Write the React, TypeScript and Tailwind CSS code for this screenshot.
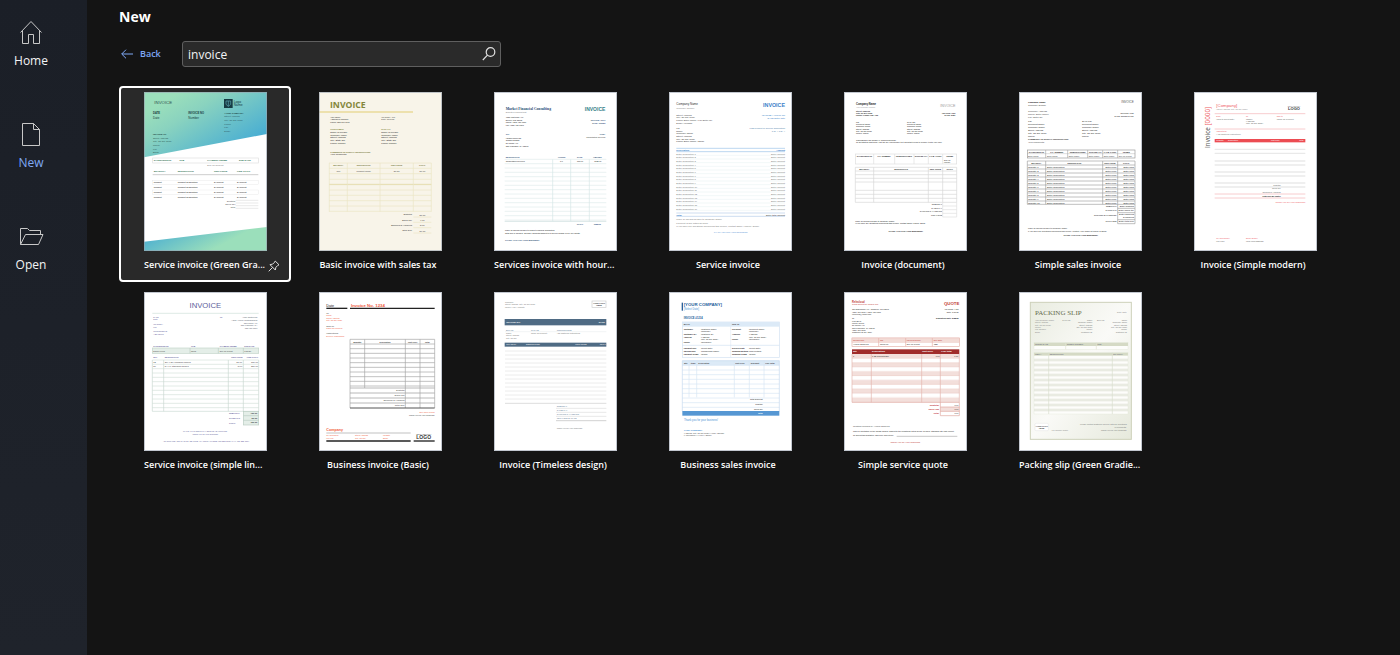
import { ReactNode } from 'react'

type Anchor = 'start' | 'middle' | 'end'

type TextRowsProps = {
	x: number;
	y: number;
	rows: string[];
	size?: number;
	gap?: number;
	fill?: string;
	bold?: boolean;
	anchor?: Anchor;
	font?: string;
}

// A block of small print, one <text> per row
const TextRows = ({ x, y, rows, size = 8, gap = 9, fill = '#444', bold = false, anchor = 'start', font = 'Liberation Sans, sans-serif' }: TextRowsProps) => (
	<g fontSize={size} fill={fill} fontWeight={bold ? 700 : 400} textAnchor={anchor} fontFamily={font}>
		{rows.map((row, index) => (
			<text key={index} x={x} y={y + index * gap}>{row}</text>
		))}
	</g>
)

type CellsProps = { y: number; cells: [number, string][]; size?: number; fill?: string; bold?: boolean; anchor?: Anchor }

const Cells = ({ y, cells, size = 7, fill = '#444', bold = false, anchor = 'start' }: CellsProps) => (
	<g fontSize={size} fill={fill} fontWeight={bold ? 700 : 400} textAnchor={anchor} fontFamily="Liberation Sans, sans-serif">
		{cells.map(([x, label]) => (
			<text key={x} x={x} y={y}>{label}</text>
		))}
	</g>
)

type RulesProps = { x1: number; x2: number; y: number; gap?: number; count?: number; color: string; width?: number }

const Rules = ({ x1, x2, y, gap = 0, count = 1, color, width = 2 }: RulesProps) => (
	<g stroke={color} strokeWidth={width}>
		{Array.from({ length: count }, (_, i) => (
			<line key={i} x1={x1} x2={x2} y1={y + i * gap} y2={y + i * gap} />
		))}
	</g>
)

const Columns = ({ xs, y1, y2, color, width = 2 }: { xs: number[]; y1: number; y2: number; color: string; width?: number }) => (
	<g stroke={color} strokeWidth={width}>
		{xs.map((x) => (
			<line key={x} x1={x} x2={x} y1={y1} y2={y2} />
		))}
	</g>
)

const Sheet = ({ origin, paper = '#ffffff', children }: { origin: string; paper?: string; children: ReactNode }) => (
	<svg viewBox={`${origin} 369 477`} className="w-[123px] h-[159px] outline -outline-offset-1 outline-gray-400/60" style={{ background: paper }} aria-hidden="true">
		{children}
	</svg>
)

const address = ['Street Address', 'City, ST ZIP Code', 'Phone', 'Fax', 'Email']

const GreenGradient = () => (
	<Sheet origin="87 31">
		<defs>
			<linearGradient id="greenTop" x1="0.2" y1="0.1" x2="0.9" y2="0.7">
				<stop offset="0" stopColor="#9bdfbb" />
				<stop offset="0.3" stopColor="#8ad3bf" />
				<stop offset="1" stopColor="#4bafd2" />
			</linearGradient>
			<linearGradient id="greenBottom" x1="0" y1="0" x2="0.8" y2="0.3">
				<stop offset="0.2" stopColor="#4fb1d0" />
				<stop offset="1" stopColor="#9bdfbb" />
			</linearGradient>
		</defs>
		<path d="M87 31H456V157L87 227Z" fill="url(#greenTop)" />
		<path d="M87 480L456 436V508H87Z" fill="url(#greenBottom)" />
		<TextRows x={118} y={68} rows={['INVOICE']} size={13} fill="#2f5050" />
		<rect x="327" y="52" width="26" height="27" fill="#173b43" />
		<path d="M333 58h14v10l-7 6-7-6Z M340 58v16" fill="none" stroke="#5aa5b0" strokeWidth="2" />
		<TextRows x={356} y={63} rows={['Logo', 'Name']} gap={11} size={10} fill="#173b43" />
		<TextRows x={114} y={98} rows={['DATE']} size={8} bold fill="#163a3a" />
		<TextRows x={114} y={113} rows={['Date']} size={9} fill="#163a3a" />
		<TextRows x={220} y={98} rows={['INVOICE NO']} size={8} bold fill="#163a3a" />
		<TextRows x={220} y={113} rows={['Number']} size={9} fill="#163a3a" />
		<TextRows x={328} y={96} rows={['YOUR COMPANY']} size={7} bold fill="#163a3a" />
		<TextRows x={328} y={107} rows={address} size={7} gap={11} fill="#2f5b66" />
		<TextRows x={114} y={159} rows={['INVOICE TO']} size={7} bold fill="#163a3a" />
		<TextRows x={114} y={171} rows={address} size={7} gap={11} fill="#2f5b56" />
		<rect x="113" y="229" width="317" height="15" fill="none" stroke="#dedede" strokeWidth="2" />
		<Cells y={239} bold size={7} fill="#1d6b4a" cells={[[116, 'SALESPERSON'], [193, 'JOB'], [277, 'PAYMENT TERMS'], [372, 'DUE DATE']]} />
		<TextRows x={277} y={252} rows={['Due on Receipt']} size={7} fill="#777" />
		<Cells y={272} bold size={7} fill="#1d6b4a" cells={[[116, 'QUANTITY'], [188, 'DESCRIPTION'], [297, 'UNIT PRICE'], [366, 'LINE TOTAL']]} />
		<Rules x1={113} x2={430} y={279} color="#b5b5b5" />
		{[305, 320, 335, 350].map((y) => (
			<Cells key={y} y={y} fill="#111" cells={[[116, 'Product'], [188, 'Product description'], [297, '$Amount'], [366, '$Amount']]} />
		))}
		<rect x="113" y="296" width="317" height="13" fill="none" stroke="#dedede" />
		<rect x="113" y="325" width="317" height="14" fill="none" stroke="#dedede" />
		<TextRows x={361} y={362} rows={['Subtotal', 'Sales Tax', 'Total']} size={7} anchor="end" fill="#555" />
		<Rules x1={362} x2={430} y={356} gap={8} count={4} color="#dedede" />
	</Sheet>
)

const BasicSalesTax = () => (
	<Sheet origin="27 19" paper="#f8f4e9">
		<TextRows x={60} y={67} rows={['INVOICE']} size={26} bold fill="#84863a" font="Open Sans, sans-serif" />
		<Rules x1={27} x2={309} y={79} color="#e2cd72" width={3} />
		<TextRows x={61} y={96} rows={['Your Name', 'Address of company', 'Phone: 555-010-0199']} size={6} gap={8} fill="#222" />
		<TextRows x={214} y={96} rows={['INVOICE # 100', 'Date: 05/01/20']} size={6} gap={8} fill="#444" />
		<TextRows x={61} y={133} rows={['CUSTOMER']} size={7} bold fill="#84863a" />
		<TextRows x={61} y={142} rows={['Name of Person', 'Company name', 'Street Address', 'City, State ZIP', 'Phone number']} size={7} gap={8} fill="#222" />
		<TextRows x={214} y={133} rows={['SHIP TO']} size={7} bold fill="#84863a" />
		<TextRows x={214} y={142} rows={['Name of Person', 'Company name', 'Street Address', 'City, State ZIP', 'Phone number']} size={7} gap={8} fill="#222" />
		<TextRows x={61} y={201} rows={['COMMENTS OR SPECIAL INSTRUCTIONS']} size={6} bold fill="#6d6f2c" />
		<TextRows x={61} y={208} rows={['Your comments']} size={7} fill="#222" />
		<Rules x1={57} x2={364} y={232} gap={16} count={3} color="#ebe5c4" />
		<Rules x1={57} x2={364} y={281} gap={16} count={7} color="#ebe5c4" />
		<Rules x1={57} x2={364} y={296} color="#dfd79f" />
		<Columns xs={[58, 112, 210, 310, 364]} y1={232} y2={378} color="#ebe5c4" />
		<Cells y={241} bold size={6} anchor="middle" fill="#6d6f2c" cells={[[85, 'QUANTITY'], [161, 'DESCRIPTION'], [260, 'UNIT PRICE'], [337, 'TOTAL']]} />
		<Cells y={258} anchor="middle" cells={[[85, '100'], [161, 'Product name'], [260, '$0.50'], [337, '50.00']]} />
		<TextRows x={306} y={389} rows={['Subtotal', 'Sales Tax', 'Shipping & Handling', 'Total Due']} size={7} gap={16} anchor="end" fill="#333" />
		<TextRows x={337} y={390} rows={['50.00', '4.00', '5.00', '59.00']} size={7} gap={16} anchor="middle" fill="#333" />
		<Rules x1={310} x2={364} y={394} gap={16} count={4} color="#ebe5c4" />
	</Sheet>
)

const HoursAndRate = () => (
	<Sheet origin="27 19">
		<TextRows x={62} y={73} rows={['Market Financial Consulting']} size={11} bold fill="#274b74" font="Liberation Serif, serif" />
		<TextRows x={62} y={82} rows={['Experts in earning trust']} size={6} fill="#777" />
		<TextRows x={361} y={76} rows={['INVOICE']} size={15} bold anchor="end" fill="#36838a" />
		<TextRows x={62} y={97} rows={['4321 First Main Ave', 'Denver, CO 12345', 'Phone: (123) 456-7890', 'Fax: (123) 456-7891']} size={6} gap={8} fill="#111" />
		<TextRows x={361} y={106} rows={['INVOICE: #00-1', 'DATE: 1/30/20']} size={6} gap={10} bold anchor="end" fill="#274b74" />
		<TextRows x={62} y={148} rows={['TO:']} size={7} bold fill="#274b74" />
		<TextRows x={62} y={159} rows={['Hanson Cheevas', 'Graphic Design', '89 Pacific Ave', 'San Francisco, CA 12345']} size={6} gap={8} fill="#111" />
		<TextRows x={361} y={148} rows={['FOR:']} size={7} bold anchor="end" fill="#274b74" />
		<TextRows x={361} y={158} rows={['Consultation services']} size={6} anchor="end" fill="#333" />
		<Cells y={217} bold size={6} fill="#274b74" cells={[[62, 'DESCRIPTION'], [219, 'HOURS'], [276, 'RATE'], [324, 'AMOUNT']]} />
		<Rules x1={59} x2={364} y={221} gap={13} count={15} color="#dfecec" />
		<Rules x1={59} x2={364} y={407} color="#c4d9d9" />
		<Columns xs={[203, 257, 313]} y1={221} y2={407} color="#d5e6e6" />
		<Cells y={229} size={6} fill="#222" cells={[[62, 'Consultation services'], [225, '3.0'], [276, '375.00'], [328, '1125.00']]} />
		<Cells y={417} bold size={6} fill="#274b74" cells={[[275, 'TOTAL'], [326, '1125.00']]} />
		<TextRows x={60} y={436} rows={['Make all checks payable to Market Financial Consulting.', 'Total due in 15 days. Overdue accounts subject to a service charge of 1% per month.']} size={6} gap={8} fill="#111" />
		<TextRows x={60} y={467} rows={['THANK YOU FOR YOUR BUSINESS!']} size={6} bold fill="#274b74" />
	</Sheet>
)

const ServiceInvoice = () => (
	<Sheet origin="27 19">
		<TextRows x={49} y={58} rows={['Company Name']} size={9} fill="#333" />
		<TextRows x={49} y={69} rows={['Company Slogan']} size={7} fill="#888" />
		<TextRows x={375} y={65} rows={['INVOICE']} size={16} bold anchor="end" fill="#3b7fc9" />
		<TextRows x={49} y={90} rows={['Street Address', 'City, ST ZIP Code', 'Phone Enter phone | Fax Enter fax', 'Email | Website']} size={7} gap={8} fill="#444" />
		<TextRows x={375} y={90} rows={['INVOICE # Invoice No', 'DATE Enter date']} size={7} gap={9} anchor="end" fill="#3b7fc9" />
		<TextRows x={49} y={130} rows={['TO', 'Name', 'Company Name', 'Street Address', 'City, ST ZIP Code', 'Phone Enter phone | Email']} size={7} gap={8} fill="#333" />
		<TextRows x={375} y={130} rows={['FOR Project or service description', 'P.O. # P.O. #']} size={7} gap={8} anchor="end" fill="#4c7ba9" />
		<Rules x1={49} x2={375} y={188} gap={10} count={2} color="#9cc3e8" />
		<Cells y={197} bold fill="#3b7fc9" cells={[[49, 'Description'], [349, 'Amount']]} />
		<TextRows x={49} y={207} rows={Array.from({ length: 16 }, (_, i) => `Enter description ${i + 1}`)} size={7} gap={11} fill="#777" />
		<TextRows x={375} y={207} rows={Array(16).fill('Enter amount')} size={7} gap={11} anchor="end" fill="#777" />
		<Rules x1={49} x2={375} y={209} gap={11} count={16} color="#d7e8ea" width={1} />
		<Rules x1={49} x2={375} y={382} gap={10} count={2} color="#b5cbe8" />
		<Cells y={390} bold fill="#3b7fc9" cells={[[49, 'Total']]} />
		<TextRows x={375} y={390} rows={['Enter total amount']} size={7} anchor="end" fill="#333" />
		<TextRows x={49} y={404} rows={['Make all checks payable to Company Name', 'Payment is due within 30 days.', 'If you have any questions concerning this invoice, contact Name | Phone | Email']} size={7} gap={10} fill="#777" />
		<TextRows x={212} y={443} rows={['THANK YOU FOR YOUR BUSINESS!']} size={6} anchor="middle" fill="#5a97d6" />
	</Sheet>
)

const InvoiceDocument = () => (
	<Sheet origin="27 19">
		<TextRows x={63} y={59} rows={['Company Name']} size={8} bold fill="#222" />
		<TextRows x={63} y={66} rows={['Your company slogan']} size={6} fill="#999" />
		<TextRows x={361} y={64} rows={['INVOICE']} size={11} anchor="end" fill="#999" />
		<TextRows x={63} y={80} rows={['Street Address', 'City, ST ZIP Code', 'Phone: Phone Fax: Fax']} size={6} gap={6} bold fill="#222" />
		<TextRows x={361} y={84} rows={['INVOICE #100', 'DATE: Date']} size={6} gap={6} bold anchor="end" fill="#222" />
		<TextRows x={63} y={111} rows={['TO:', 'Recipient Name', 'Company Name', 'Street Address', 'City, ST ZIP Code', 'Phone: Phone']} size={6} gap={7} fill="#111" />
		<TextRows x={216} y={111} rows={['SHIP TO:', 'Recipient Name', 'Company Name', 'Street Address', 'City, ST ZIP Code', 'Phone: Phone']} size={6} gap={7} fill="#111" />
		<TextRows x={63} y={165} rows={['COMMENTS OR SPECIAL INSTRUCTIONS:', 'To get started right away, just tap any placeholder text and start typing to replace it with your own.']} size={6} gap={7} fill="#222" />
		<rect x="61" y="205" width="304" height="30" fill="none" stroke="#dedede" strokeWidth="2" />
		<Columns xs={[116, 179, 237, 280, 323]} y1={205} y2={235} color="#dedede" />
		<Cells y={214} bold size={6} anchor="middle" fill="#222" cells={[[88, 'SALESPERSON'], [147, 'P.O. NUMBER'], [207, 'REQUISITIONER'], [258, 'SHIPPED VIA'], [301, 'F.O.B. POINT'], [344, 'TERMS']]} />
		<TextRows x={327} y={225} rows={['Due on', 'receipt']} size={6} gap={7} fill="#222" />
		<Rules x1={61} x2={365} y={245} gap={11} count={5} color="#d6d6d6" />
		<Rules x1={61} x2={365} y={314} gap={12} count={4} color="#d6d6d6" />
		<Columns xs={[61, 116, 280, 323, 365]} y1={245} y2={350} color="#d6d6d6" />
		<Cells y={253} bold size={6} anchor="middle" fill="#222" cells={[[88, 'QUANTITY'], [198, 'DESCRIPTION'], [301, 'UNIT PRICE'], [344, 'TOTAL']]} />
		<TextRows x={321} y={358} rows={['SUBTOTAL', 'SALES TAX', 'SHIPPING & HANDLING', 'TOTAL DUE']} size={6} gap={11} anchor="end" fill="#222" />
		<Rules x1={323} x2={365} y={361} gap={11} count={4} color="#dedede" />
		<Columns xs={[323, 365]} y1={350} y2={394} color="#dedede" />
		<TextRows x={61} y={408} rows={['Make all checks payable to Company Name', 'If you have any questions concerning this invoice, contact Name, Phone, Email']} size={6} gap={7} fill="#111" />
		<TextRows x={212} y={440} rows={['THANK YOU FOR YOUR BUSINESS!']} size={6} bold anchor="middle" fill="#111" />
	</Sheet>
)

const SimpleSales = () => (
	<Sheet origin="27 19">
		<TextRows x={54} y={51} rows={['Company Name']} size={7} bold fill="#222" />
		<TextRows x={54} y={60} rows={['Company Slogan']} size={7} />
		<TextRows x={371} y={52} rows={['INVOICE']} size={9} anchor="end" fill="#555" />
		<TextRows x={54} y={78} rows={['Company Address', 'Phone: Enter phone', 'Fax: Enter fax']} size={7} />
		<TextRows x={371} y={85} rows={['INVOICE #100', 'DATE: ENTER DATE']} size={6} anchor="end" bold />
		<TextRows x={54} y={108} rows={['TO:', 'Recipient Name', 'Company Name', 'Street Address', 'City, ST ZIP Code', 'Phone']} size={7} fill="#222" />
		<TextRows x={216} y={108} rows={['SHIP TO:', 'Recipient Name', 'Company Name', 'Street Address', 'City, ST ZIP Code', 'Phone']} size={7} fill="#222" />
		<TextRows x={54} y={164} rows={['COMMENTS OR SPECIAL INSTRUCTIONS:']} size={6} bold fill="#222" />
		<TextRows x={54} y={173} rows={['Your comments']} size={7} />
		<rect x="52" y="193" width="323" height="24" fill="none" stroke="#999" strokeWidth="2" />
		<Rules x1={52} x2={375} y={204} color="#999" width={1} />
		<Columns xs={[107, 173, 233, 278, 323]} y1={193} y2={217} color="#aaa" />
		<Cells y={201} bold size={6} anchor="middle" fill="#222" cells={[[79, 'SALESPERSON'], [140, 'P.O. NUMBER'], [203, 'REQUISITIONER'], [256, 'SHIPPED VIA'], [300, 'F.O.B. POINT'], [349, 'TERMS']]} />
		<Cells y={213} size={6} cells={[[54, 'Enter Name'], [111, 'Enter Name'], [176, 'Enter Name'], [236, 'Enter Name'], [281, 'Enter Name'], [326, 'Due on receipt']]} />
		<Rules x1={52} x2={375} y={226} gap={12} count={11} color="#a0a0a0" />
		<Rules x1={52} x2={375} y={356} color="#a0a0a0" />
		<Columns xs={[52, 107, 278, 323, 375]} y1={226} y2={356} color="#a0a0a0" />
		<Cells y={235} bold size={6} anchor="middle" fill="#222" cells={[[79, 'QUANTITY'], [193, 'DESCRIPTION'], [300, 'UNIT PRICE'], [349, 'TOTAL']]} />
		<TextRows x={54} y={246} rows={Array.from({ length: 10 }, (_, i) => `Quantity ${i + 1}`)} size={7} gap={12} fill="#222" />
		<TextRows x={111} y={246} rows={Array(10).fill('Enter description')} size={7} gap={12} fill="#222" />
		<TextRows x={320} y={246} rows={Array(10).fill('Enter price')} size={7} gap={12} anchor="end" fill="#222" />
		<TextRows x={372} y={246} rows={Array(10).fill('Enter total')} size={7} gap={12} anchor="end" fill="#222" />
		<Cells y={364} size={6} bold anchor="end" cells={[[320, 'SUBTOTAL']]} />
		<Cells y={377} size={6} bold anchor="end" cells={[[320, 'SALES TAX']]} />
		<Cells y={390} size={6} bold anchor="end" cells={[[320, 'SHIPPING & HANDLING']]} />
		<Cells y={410} size={6} bold anchor="end" cells={[[320, 'TOTAL DUE']]} />
		<TextRows x={372} y={364} rows={['Enter subtotal', 'Enter sales tax', 'Enter shipping']} size={7} gap={12} anchor="end" fill="#222" />
		<TextRows x={372} y={398} rows={['& handling', 'Enter total due']} size={7} gap={12} anchor="end" fill="#222" />
		<Rules x1={323} x2={375} y={368} gap={13} count={2} color="#a0a0a0" />
		<Rules x1={323} x2={375} y={402} gap={12} count={2} color="#a0a0a0" />
		<Columns xs={[323, 375]} y1={356} y2={414} color="#a0a0a0" />
		<TextRows x={54} y={429} rows={['Make all checks payable to Company Name', 'If you have any questions concerning this invoice, contact: Your Name at Phone or Email']} size={6} gap={9} fill="#222" />
		<TextRows x={212} y={450} rows={['THANK YOU FOR YOUR BUSINESS!']} size={6} bold anchor="middle" fill="#111" />
	</Sheet>
)

const SimpleModern = () => (
	<Sheet origin="27 19">
		<text transform="translate(74 187) rotate(-90)" fontSize="19" fill="#555" fontFamily="Open Sans, sans-serif">Invoice <tspan fill="#ee5a5f">[0000]</tspan></text>
		<TextRows x={94} y={63} rows={['[Company]']} size={13} fill="#ee5a5f" />
		<TextRows x={94} y={73} rows={['[Street Address, City, ST ZIP Code]']} size={6} fill="#888" />
		<TextRows x={327} y={64} rows={['REPLACE WITH']} size={5} anchor="middle" fill="#777" />
		<TextRows x={327} y={74} rows={['LOGO']} size={12} bold anchor="middle" fill="#333" />
		<Rules x1={89} x2={361} y={84} color="#f4b4b6" />
		<Cells y={95} size={6} fill="#ee5a5f" cells={[[94, 'Date'], [183, 'To'], [275, 'Ship to']]} />
		<Cells y={103} size={6} fill="#666" cells={[[94, '[Click to select date]'], [275, '[Same as recipient]']]} />
		<TextRows x={183} y={103} rows={['[Name]', '[Address]', '[City, ST ZIP Code]']} size={6} gap={6} fill="#555" />
		<Rules x1={89} x2={361} y={130} color="#f4b4b6" />
		<TextRows x={94} y={138} rows={['Instructions']} size={6} fill="#ee5a5f" />
		<TextRows x={94} y={147} rows={['[Add additional instructions]']} size={6} fill="#777" />
		<rect x="89" y="160" width="272" height="10" fill="#ec4c52" />
		<Cells y={167} size={6} fill="#fff" cells={[[94, 'Quantity'], [129, 'Description'], [258, 'Unit Price'], [343, 'Total']]} />
		<Rules x1={89} x2={361} y={191} gap={12} count={2} color="#d8d8d8" />
		<Rules x1={89} x2={361} y={226} gap={12} count={2} color="#cfcfcf" />
		<Rules x1={89} x2={361} y={259} gap={12} count={2} color="#cfcfcf" />
		<Rules x1={89} x2={361} y={292} gap={12} count={2} color="#cfcfcf" />
		<TextRows x={287} y={300} rows={['Subtotal', 'Sales Tax', 'Shipping & Handling']} size={6} gap={11} anchor="end" fill="#666" />
		<TextRows x={287} y={333} rows={['Total Due By [Date]']} size={6} anchor="end" bold fill="#222" />
		<Rules x1={89} x2={361} y={325} gap={12} count={2} color="#f4b4b6" />
		<TextRows x={361} y={353} rows={['Thank you for your business!']} size={7} anchor="end" fill="#ee5a5f" />
		<Cells y={460} size={6} fill="#ee5a5f" cells={[[94, 'Tel [Telephone]'], [183, 'Email [Email]']]} />
		<Cells y={468} size={6} fill="#555" cells={[[94, 'Fax [Fax]'], [183, 'Web [Web address]']]} />
	</Sheet>
)

const SimpleLines = () => (
	<Sheet origin="27 19">
		<TextRows x={211} y={68} rows={['INVOICE']} size={23} anchor="middle" fill="#60609a" />
		<Rules x1={52} x2={371} y={83} color="#cfe0da" />
		<TextRows x={55} y={97} rows={['DATE', 'Date']} size={6} gap={7} fill="#60609a" />
		<TextRows x={55} y={119} rows={['INVOICE #', '100']} size={6} gap={7} fill="#60609a" />
		<TextRows x={55} y={140} rows={['CUSTOMER ID', 'ABC 12345']} size={6} gap={7} fill="#60609a" />
		<TextRows x={254} y={98} rows={['TO']} size={6} fill="#60609a" />
		<TextRows x={367} y={98} rows={['Anjali Chaturvedi', 'Adina Avenue Photographers', '123 Pacific Ave', 'San Francisco, CA', '123-456-7890']} size={6} gap={8} anchor="end" fill="#555b68" />
		<Cells y={183} bold size={6} fill="#60609a" cells={[[55, 'SALESPERSON'], [168, 'JOB'], [254, 'PAYMENT TERMS'], [328, 'DUE DATE']]} />
		<rect x="52" y="187" width="319" height="16" fill="#e4eee8" stroke="#c2d4ca" strokeWidth="2" />
		<Columns xs={[165, 250, 325]} y1={187} y2={203} color="#b9cdc2" />
		<Cells y={198} size={6} cells={[[55, 'Daniel Perea'], [168, 'Sales'], [254, 'Due on receipt'], [328, '1/30/20']]} />
		<Cells y={218} bold size={6} fill="#60609a" cells={[[55, 'QTY'], [89, 'DESCRIPTION'], [289, 'UNIT PRICE'], [335, 'LINE TOTAL']]} />
		<Rules x1={52} x2={371} y={223} gap={13} count={12} color="#d3e1da" />
		<Rules x1={52} x2={371} y={377} color="#cadbd3" />
		<Columns xs={[52, 86, 280, 325, 371]} y1={223} y2={377} color="#c9d8d0" />
		<Cells y={232} cells={[[55, '12'], [89, '20" x 30" hanging frames'], [304, '15.00'], [348, '180.00']]} />
		<Cells y={244} cells={[[55, '50'], [89, '5" x 7" standing frames'], [308, '5.00'], [348, '250.00']]} />
		<rect x="325" y="377" width="46" height="41" fill="#e4eee8" stroke="#b9cdc2" strokeWidth="2" />
		<Rules x1={325} x2={371} y={390} gap={14} count={2} color="#b9cdc2" />
		<TextRows x={282} y={384} rows={['SUBTOTAL', 'SALES TAX', 'TOTAL']} size={6} gap={15} bold fill="#60609a" />
		<TextRows x={367} y={385} rows={['430.00', '20.00', '450.00']} size={7} gap={14} bold anchor="end" fill="#444" />
		<TextRows x={211} y={440} rows={['MAKE ALL CHECKS PAYABLE TO ADATUM LTD.', 'Thank you for your business!']} size={6} gap={7} anchor="middle" fill="#60609a" />
		<TextRows x={213} y={469} rows={['ADATUM LTD. 123 MAIN ST. SEATTLE, WA 78910 | PHONE: 111-222-3333 | FAX: 111-222-3334']} size={6} anchor="middle" fill="#60609a" />
	</Sheet>
)

const BusinessBasic = () => (
	<Sheet origin="552 19">
		<TextRows x={574} y={63} rows={['Date']} size={11} fill="#222" />
		<TextRows x={648} y={63} rows={['Invoice No. 1234']} size={13} bold fill="#f05a3c" />
		<Rules x1={574} x2={637} y={68} color="#222" width={4} />
		<Rules x1={645} x2={899} y={68} color="#222" width={4} />
		<TextRows x={574} y={85} rows={['To']} size={7} />
		<TextRows x={574} y={92} rows={['Name', 'Street Address', 'City, ST ZIP Code']} size={6} gap={7} fill="#f05a3c" />
		<TextRows x={574} y={123} rows={['Ship To']} size={7} />
		<TextRows x={574} y={130} rows={['Same as recipient']} size={6} fill="#f05a3c" />
		<TextRows x={574} y={146} rows={['Instructions']} size={7} />
		<TextRows x={574} y={153} rows={['Delivery instructions']} size={6} fill="#f05a3c" />
		<Rules x1={645} x2={899} y={161} gap={14} count={11} color="#a3a3a3" />
		<Rules x1={645} x2={899} y={307} gap={15} count={4} color="#949494" />
		<Columns xs={[645, 811, 855, 899]} y1={161} y2={367} color="#a3a3a3" />
		<Columns xs={[689]} y1={161} y2={307} color="#a3a3a3" />
		<Rules x1={645} x2={899} y={367} color="#555" width={3} />
		<Cells y={171} anchor="middle" size={6} bold fill="#333" cells={[[667, 'Quantity'], [750, 'Description'], [833, 'Unit Price'], [877, 'Total']]} />
		<TextRows x={809} y={316} rows={['Subtotal', 'Sales Tax', 'Shipping & Handling', 'Total Due']} size={7} gap={15} anchor="end" />
		<TextRows x={899} y={381} rows={['Due upon receipt']} size={6} anchor="end" fill="#f05a3c" />
		<TextRows x={899} y={392} rows={['Thank you for your business!']} size={6} anchor="end" />
		<TextRows x={574} y={437} rows={['Company']} size={11} bold fill="#f05a3c" />
		<Rules x1={574} x2={827} y={442} color="#444" width={1} />
		<TextRows x={574} y={452} rows={['Tel Telephone', 'Fax Fax']} size={6} gap={7} fill="#f05a3c" />
		<TextRows x={660} y={452} rows={['Street Address', 'City, ST ZIP']} size={6} gap={7} fill="#f05a3c" />
		<TextRows x={744} y={452} rows={['Website', 'Email']} size={6} gap={7} fill="#f05a3c" />
		<TextRows x={866} y={447} rows={['REPLACE WITH']} size={6} anchor="middle" />
		<TextRows x={866} y={461} rows={['LOGO']} size={15} bold anchor="middle" fill="#333" />
		<Rules x1={574} x2={827} y={466} color="#222" width={4} />
		<Rules x1={836} x2={899} y={466} color="#222" width={4} />
	</Sheet>
)

const Timeless = () => (
	<Sheet origin="27 19">
		<TextRows x={60} y={51} rows={['Company', 'Street Address, City, ST ZIP Code', 'Phone | Fax | Website']} size={6} gap={8} fill="#777" />
		<rect x="321" y="46" width="42" height="20" fill="#fff" stroke="#ccc" strokeWidth="2" />
		<TextRows x={342} y={54} rows={['YOUR LOGO', 'HERE']} size={6} gap={7} bold anchor="middle" fill="#222" />
		<rect x="59" y="100" width="305" height="19" fill="#4f6b84" />
		<Cells y={112} size={7} bold fill="#fff" cells={[[64, 'INVOICE NO.'], [341, 'DATE']]} />
		<Cells y={135} size={6} fill="#5a7894" cells={[[63, 'BILL TO'], [138, 'SHIP TO'], [215, 'INSTRUCTIONS']]} />
		<Rules x1={60} x2={364} y={138} color="#d8dde2" width={1} />
		<TextRows x={63} y={145} rows={['Name', 'Street Address', 'City, ST ZIP']} size={6} gap={7} fill="#777" />
		<Cells y={145} size={6} fill="#777" cells={[[138, 'Same as recipient'], [215, 'Add additional instructions']]} />
		<rect x="59" y="171" width="305" height="12" fill="#4f6b84" />
		<Cells y={179} size={6} fill="#fff" cells={[[64, 'QUANTITY'], [123, 'DESCRIPTION'], [271, 'UNIT PRICE'], [344, 'TOTAL']]} />
		<Rules x1={60} x2={364} y={196} gap={12} count={13} color="#e2e2e2" />
		<Rules x1={60} x2={364} y={353} color="#cccccc" />
		<TextRows x={215} y={363} rows={['SUBTOTAL', 'SALES TAX', 'SHIPPING & HANDLING', 'TOTAL DUE BY DATE']} size={6} gap={12} fill="#5a7894" />
		<Rules x1={213} x2={364} y={368} gap={12} count={3} color="#dddddd" />
		<Rules x1={213} x2={364} y={405} color="#bbbbbb" />
		<TextRows x={215} y={429} rows={['Thank you for your business!']} size={6} fill="#777" />
	</Sheet>
)

const BusinessSales = () => (
	<Sheet origin="552 19">
		<rect x="590" y="51" width="4" height="24" fill="#26609b" />
		<TextRows x={596} y={62} rows={['[YOUR COMPANY]']} size={13} bold fill="#26609b" />
		<TextRows x={596} y={73} rows={['[Select Date]']} size={8} fill="#4b93d4" />
		<TextRows x={596} y={100} rows={['INVOICE #1234']} size={8} bold fill="#26609b" />
		<rect x="592" y="109" width="291" height="106" fill="none" stroke="#d2e2f2" strokeWidth="2" />
		<rect x="592" y="109" width="291" height="14" fill="#dceaf7" />
		<Cells y={118} size={6} bold cells={[[596, 'Bill To'], [741, 'Ship To']]} />
		<Columns xs={[737]} y1={109} y2={215} color="#e2ecf6" />
		<Rules x1={592} x2={883} y={179} color="#d2e2f2" />
		<TextRows x={596} y={132} rows={['Customer', '', 'Customer ID#', 'Address', '', 'Phone']} size={6} gap={8} bold fill="#222" />
		<TextRows x={648} y={132} rows={['[Customer Name]', '[Company]', '[Customer ID]', '[Address]', '[City, ST ZIP Code]', '[Telephone]']} size={6} gap={8} fill="#222" />
		<TextRows x={741} y={132} rows={['Recipient', '', 'Address', '', 'Phone']} size={6} gap={8} bold fill="#222" />
		<TextRows x={792} y={132} rows={['[Recipient Name]', '[Company]', '[Address]', '[City, ST ZIP Code]', '[Telephone]']} size={6} gap={8} fill="#222" />
		<TextRows x={596} y={190} rows={['Payment Due', 'Salesperson', 'Payment Terms']} size={6} gap={9} bold fill="#222" />
		<TextRows x={648} y={190} rows={['[Select Date]', '[Salesperson Name]', '[Terms]']} size={6} gap={9} fill="#222" />
		<TextRows x={741} y={190} rows={['Delivery Date', 'Shipping Method', 'Shipping Terms']} size={6} gap={9} bold fill="#222" />
		<TextRows x={792} y={190} rows={['[Select Date]', '[Ship Method]', '[Terms]']} size={6} gap={9} fill="#222" />
		<rect x="592" y="225" width="291" height="14" fill="#dceaf7" />
		<Cells y={234} size={6} bold cells={[[597, 'Qty.'], [617, 'Item#'], [640, 'Description'], [751, 'Unit Price'], [797, 'Discount'], [841, 'Line Total']]} />
		<Rules x1={592} x2={883} y={225} color="#c5daef" />
		<Rules x1={592} x2={883} y={239} gap={14} count={10} color="#d6e5f4" />
		<Columns xs={[592, 883]} y1={225} y2={377} color="#c5daef" />
		<Columns xs={[612, 635, 748, 793, 837]} y1={225} y2={335} color="#d6e5f4" />
		<TextRows x={833} y={344} rows={['Total Discount', 'Subtotal', 'Sales Tax']} size={6} gap={14} anchor="end" fill="#222" />
		<rect x="592" y="376" width="291" height="14" fill="#5697d3" />
		<TextRows x={833} y={385} rows={['Total']} size={6} bold anchor="end" fill="#fff" />
		<TextRows x={597} y={407} rows={['Thank you for your business!']} size={8} fill="#4b93d4" />
		<TextRows x={597} y={436} rows={['[Your Company]']} size={7} bold fill="#4b93d4" />
		<TextRows x={597} y={444} rows={['[Address, City, ST ZIP Code] | [Web Address]', 't. [Telephone] | f. [Fax] | [Email]']} size={6} gap={8} />
	</Sheet>
)

const ServiceQuote = () => (
	<Sheet origin="27 19">
		<TextRows x={51} y={51} rows={['Relecloud']} size={8} bold fill="#bf3b37" />
		<TextRows x={51} y={58} rows={['Cloud storing the modern way']} size={6} fill="#bf3b37" />
		<TextRows x={373} y={57} rows={['QUOTE']} size={13} bold anchor="end" fill="#bf3b37" />
		<TextRows x={51} y={74} rows={['123 Elderwood Ave., Nashville, TN 12345', '(123) 456-7890 | (123) 456-7891', 'relecloud@email.com']} size={6} gap={7} fill="#222" />
		<TextRows x={371} y={74} rows={['INVOICE #: 111', 'Date: 1/30/20']} size={6} gap={7} anchor="end" fill="#222" />
		<TextRows x={51} y={101} rows={['To', 'Finn Boyd', 'Liberty Group', '89 Pacific Ave', 'San Francisco, CA 12345', '(123) 456-7890', 'Customer ID No. 1234']} size={6} gap={7} fill="#222" />
		<TextRows x={371} y={101} rows={['Expiration Date: 2/28/20']} size={6} bold anchor="end" fill="#222" />
		<rect x="51" y="157" width="322" height="25" fill="#fff" stroke="#e5b1a9" strokeWidth="2" />
		<rect x="51" y="157" width="322" height="13" fill="#f3dcd7" stroke="#e5b1a9" />
		<Columns xs={[131, 212, 292]} y1={157} y2={182} color="#e5b1a9" />
		<Cells y={167} size={6} fill="#bf3b37" cells={[[54, 'Salesperson'], [135, 'Job'], [215, 'Payment Terms'], [296, 'Due Date']]} />
		<Cells y={179} size={6} fill="#222" cells={[[54, 'Yvonne Embezza'], [135, 'Sales rep'], [215, 'Due on receipt'], [296, 'TBD']]} />
		<rect x="51" y="191" width="322" height="14" fill="#a02c2b" />
		<Cells y={200} bold size={7} fill="#fff" cells={[[54, 'Qty'], [111, 'Description'], [262, 'Unit price'], [319, 'Line total']]} />
		{[205, 231, 258, 284, 310, 337].map((y) => (
			<rect key={y} x="51" y={y} width="322" height="13" fill="#f3dfdb" />
		))}
		<Rules x1={51} x2={373} y={218} gap={13} count={10} color="#e8c3bc" width={1} />
		<Rules x1={51} x2={373} y={350} color="#e0a79f" />
		<Columns xs={[51, 109, 260, 316, 373]} y1={205} y2={350} color="#e4b5ad" />
		<Cells y={213} size={6} fill="#222" cells={[[54, '1'], [111, '1 TB cloud storage'], [302, '0.00'], [358, '0.00']]} />
		<rect x="316" y="364" width="57" height="13" fill="#f3dfdb" />
		<Rules x1={316} x2={373} y={364} gap={13} count={3} color="#e0a79f" />
		<Columns xs={[316, 373]} y1={350} y2={390} color="#e0a79f" />
		<TextRows x={312} y={360} rows={['Subtotal', 'Sales Tax', 'Total']} size={7} gap={13} bold anchor="end" fill="#bf3b37" />
		<TextRows x={370} y={360} rows={['0.00', '0.00', '0.00']} size={6} gap={13} anchor="end" fill="#222" />
		<TextRows x={54} y={424} rows={['Quotation prepared by: Yvonne Embezza']} size={6} />
		<TextRows x={54} y={438} rows={['This is a quotation on the goods named, subject to the conditions noted below: 30 days, standard rate cost receipt.', 'To accept this quotation, sign here and return:']} size={6} gap={13} fill="#222" />
		<Rules x1={185} x2={367} y={452} color="#555" width={1} />
		<TextRows x={211} y={472} rows={['Thank you for your business!']} size={7} anchor="middle" fill="#bf3b37" />
	</Sheet>
)

const PackingSlip = () => (
	<Sheet origin="552 19">
		<defs>
			<linearGradient id="slip" x1="0" y1="0" x2="1" y2="1">
				<stop offset="0" stopColor="#e9ece0" />
				<stop offset="0.3" stopColor="#f4f5ef" />
				<stop offset="0.5" stopColor="#fafaf7" />
				<stop offset="1" stopColor="#e6e9dc" />
			</linearGradient>
		</defs>
		<rect x="586" y="50" width="303" height="411" fill="url(#slip)" stroke="#cdd1ba" strokeWidth="3" />
		<TextRows x={600} y={87} rows={['PACKING SLIP']} size={21} fill="#666d4e" font="Liberation Serif, serif" />
		<TextRows x={875} y={82} rows={['Date: Date']} size={6} anchor="end" fill="#888" />
		<TextRows x={600} y={106} rows={['Your Company Name', 'Street Address', 'City, ST ZIP Code', 'Phone', 'Fax Number', 'Email']} size={6} gap={7} fill="#888" />
		<Cells y={106} size={6} fill="#777" cells={[[682, 'SHIP TO'], [786, 'BILL TO']]} />
		<TextRows x={772} y={106} rows={['Name', 'Company Name', 'Street Address', 'City, ST ZIP Code', 'Phone', 'Customer ID']} size={6} gap={7} anchor="end" fill="#777" />
		<TextRows x={876} y={106} rows={['Name', 'Company Name', 'Street Address', 'City, ST ZIP Code', 'Phone', 'Customer ID']} size={6} gap={7} anchor="end" fill="#777" />
		<rect x="597" y="171" width="282" height="20" fill="#fdfdfb" stroke="#dfe3d2" />
		<rect x="597" y="171" width="282" height="10" fill="#d5dac5" />
		<Columns xs={[692, 784]} y1={171} y2={191} color="#dfe3d2" />
		<Cells y={178} size={6} fill="#667" cells={[[600, 'ORDER DATE'], [695, 'ORDER NUMBER'], [787, 'JOB']]} />
		<rect x="597" y="201" width="282" height="184" fill="#fdfdfb" />
		<rect x="597" y="201" width="282" height="9" fill="#d5dac5" />
		<Cells y={208} size={6} fill="#667" cells={[[600, 'ITEM #'], [644, 'DESCRIPTION'], [834, 'QUANTITY']]} />
		{Array.from({ length: 11 }, (_, i) => (
			<rect key={i} x="597" y={219 + i * 15} width="282" height="8" fill="#e9ebe2" />
		))}
		<rect x="597" y="201" width="282" height="184" fill="none" stroke="#dfe3d2" />
		<Columns xs={[641, 832]} y1={201} y2={385} color="#dadece" />
		<rect x="600" y="413" width="40" height="22" rx="3" fill="#fff" stroke="#d8d8d8" />
		<TextRows x={620} y={424} rows={['YOUR LOGO', 'HERE']} size={6} gap={7} bold anchor="middle" fill="#333" />
		<TextRows x={649} y={435} rows={['Your Company Slogan']} size={5} fill="#888" />
		<TextRows x={875} y={417} rows={['Please contact Customer Service with any questions', 'or comments.', 'Thank you for your business!']} size={6} gap={9} anchor="end" fill="#777" />
	</Sheet>
)

const templates = [
	{ title: 'Service invoice (Green Gra...', Preview: GreenGradient },
	{ title: 'Basic invoice with sales tax', Preview: BasicSalesTax },
	{ title: 'Services invoice with hour...', Preview: HoursAndRate },
	{ title: 'Service invoice', Preview: ServiceInvoice },
	{ title: 'Invoice (document)', Preview: InvoiceDocument },
	{ title: 'Simple sales invoice', Preview: SimpleSales },
	{ title: 'Invoice (Simple modern)', Preview: SimpleModern },
	{ title: 'Service invoice (simple lin...', Preview: SimpleLines },
	{ title: 'Business invoice (Basic)', Preview: BusinessBasic },
	{ title: 'Invoice (Timeless design)', Preview: Timeless },
	{ title: 'Business sales invoice', Preview: BusinessSales },
	{ title: 'Simple service quote', Preview: ServiceQuote },
	{ title: 'Packing slip (Green Gradie...', Preview: PackingSlip },
]

const navItems = [
	{ label: 'Home', path: 'M1.5 12.5L12 1.5L22.5 12.5M3.5 10.5V23.5H9.5V14.5H14.5V23.5H20.5V10.5' },
	{ label: 'New', path: 'M3.5 1.5H14.5L20.5 7.5V23.5H3.5ZM14.5 1.5V7.5H20.5' },
	{ label: 'Open', path: 'M1.5 20.5V4.5H8.5L10.5 6.5H21.5V10.5M1.5 20.5L6.5 10.5H24L19.5 20.5Z' },
]

const Sidebar = () => (
	<nav className="w-[87px] shrink-0 bg-linear-to-b from-[#1b1f27] to-[#1f232b]">
		{navItems.map(({ label, path }) => (
			<button key={label} type="button" className="flex flex-col items-center w-[62px] h-[102px] pt-5 cursor-pointer">
				<svg viewBox="0 0 25 25" className="w-[25px] h-[25px]" fill="none" stroke="#c8c8c8" aria-hidden="true">
					<path d={path} />
				</svg>
				<span className={`mt-[7px] text-[12px] leading-[18px] ${label === 'New' ? 'text-[#7fa8f5]' : 'text-gray-100'}`}>{label}</span>
			</button>
		))}
	</nav>
)

const SearchBar = () => (
	<div className="flex items-center mt-3">
		<button type="button" className="flex items-center gap-[7px] w-[63px] pl-0.5 text-[9px] font-semibold text-[#7fa8f5] cursor-pointer">
			<svg viewBox="0 0 12 10" className="w-3 h-2.5" fill="none" stroke="currentColor" aria-hidden="true">
				<path d="M12 5H0.8M5 0.7L0.7 5L5 9.3" />
			</svg>
			Back
		</button>
		<form role="search" className="flex items-center w-[319px] h-[26px] pl-[5px] pr-1 bg-[#2a2a2a] border border-[#5f5f5f] rounded-[3px]">
			<input
				type="text"
				aria-label="Search for online templates"
				defaultValue="invoice"
				className="flex-1 min-w-0 pt-0.5 text-[12px] text-gray-100 bg-transparent outline-none"
			/>
			<button type="button" aria-label="Search" className="cursor-pointer">
				<svg viewBox="0 0 14 14" className="w-3.5 h-3.5" fill="none" stroke="#e0e0e0" strokeWidth="1.2" aria-hidden="true">
					<circle cx="8.5" cy="5" r="4.3" />
					<path d="M5.5 8.2L0.8 13" />
				</svg>
			</button>
		</form>
	</div>
)

const PinIcon = () => (
	<svg viewBox="0 0 12 12" className="w-3 h-3 mt-0.5" fill="none" stroke="#e0e0e0" aria-hidden="true">
		<path d="M7.2 1L11 4.8L9.9 5.3L7.9 7.3L7.3 10L2 4.7L4.7 4.1L6.7 2.1ZM4.6 7.4L0.7 11.3" />
	</svg>
)

const App = () => {
	return (
		<div className="flex min-h-screen bg-[#141414] font-['Open_Sans',sans-serif]">
			<Sidebar />
			<main className="flex-1 min-w-0 pl-8 pt-[5px]">
				<h1 className="text-[14px] font-bold leading-6 text-white">New</h1>
				<SearchBar />
				<ul className="grid grid-cols-[repeat(auto-fill,172px)] gap-x-[3px] gap-y-1 mt-[19px]">
					{templates.map(({ title, Preview }, index) => (
						<li key={title}>
							<button
								type="button"
								aria-pressed={index === 0}
								className={`flex flex-col items-start w-full h-[196px] pl-[23px] pt-1 border-2 rounded-[4px] cursor-pointer ${index === 0 ? 'border-white bg-[#292929]' : 'border-transparent'}`}
							>
								<Preview />
								<span className="flex items-center gap-1.5 mt-1.5">
									<span className="w-[118px] text-[9px] font-semibold leading-4 text-center text-white whitespace-nowrap">{title}</span>
									{index === 0 && <PinIcon />}
								</span>
							</button>
						</li>
					))}
				</ul>
			</main>
		</div>
	)
}

export default App
